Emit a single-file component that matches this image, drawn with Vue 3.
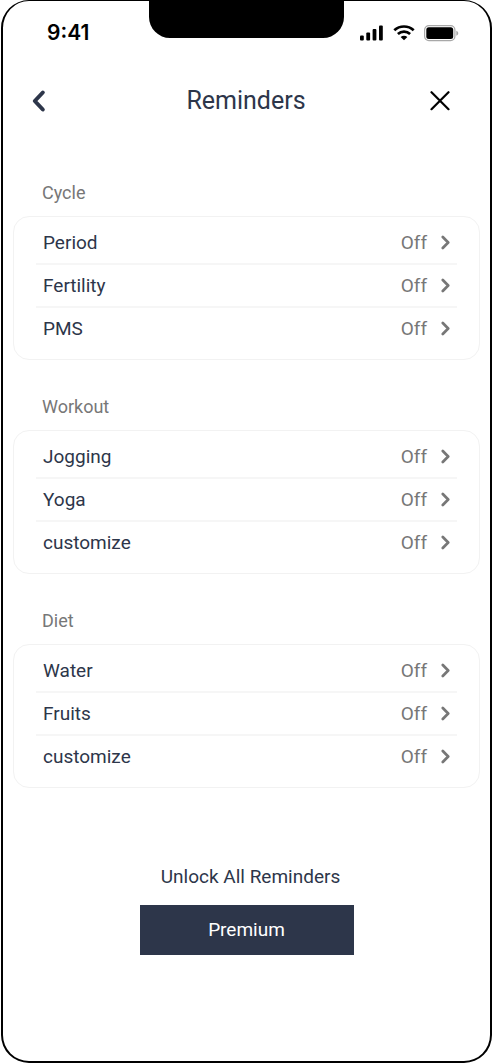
<script setup>
const groups = [
  { title: 'Cycle', items: ['Period', 'Fertility', 'PMS'] },
  { title: 'Workout', items: ['Jogging', 'Yoga', 'customize'] },
  { title: 'Diet', items: ['Water', 'Fruits', 'customize'] },
]
</script>

<template>
  <div class="phone">
    <div class="status">
      <span class="time">9:41</span>
      <div class="notch"></div>
      <div class="indicators">
        <svg width="24" height="16" viewBox="0 0 24 16" aria-hidden="true">
          <rect x="0" y="10.500" width="3.800" height="5" rx="1" />
          <rect x="6.300" y="7.500" width="3.800" height="8" rx="1" />
          <rect x="12.600" y="4" width="3.800" height="11.500" rx="1" />
          <rect x="19" y="0.500" width="3.800" height="15" rx="1" />
        </svg>
        <svg width="22" height="16" viewBox="0 0 22 16" aria-hidden="true">
          <g fill="none" stroke="#000" stroke-width="2.700">
            <path d="M1.300 5.300C6.800 0.200 15.200 0.200 20.700 5.300" />
            <path d="M4.900 9.100C8.400 5.900 13.600 5.900 17.100 9.100" />
          </g>
          <path d="M7.600 11.900C9.600 10.200 12.400 10.200 14.400 11.900L11 15.300Z" />
        </svg>
        <svg width="35" height="17" viewBox="0 0 35 17" aria-hidden="true">
          <rect x="0.600" y="0.600" width="30.300" height="15" rx="4.300" fill="none" stroke="#a8a8a8" stroke-width="1.200" />
          <rect x="2.300" y="2.300" width="26.900" height="11.600" rx="2.500" />
          <path d="M32.300 5.700C34.900 6.700 34.900 9.700 32.300 10.700Z" fill="#a8a8a8" />
        </svg>
      </div>
    </div>

    <header class="header">
      <button class="icon-button back" type="button" aria-label="Back">
        <svg width="16" height="24" viewBox="0 0 16 24" aria-hidden="true">
          <path d="M11.800 3.500L3.800 12L11.800 20.500" fill="none" stroke="#2d364a" stroke-width="4" stroke-linecap="round" stroke-linejoin="round" />
        </svg>
      </button>
      <h1>Reminders</h1>
      <button class="icon-button close" type="button" aria-label="Close">
        <svg width="20" height="20" viewBox="0 0 20 20" aria-hidden="true">
          <path d="M1.500 1.200L18.500 18.200M18.500 1.200L1.500 18.200" fill="none" stroke="#000" stroke-width="2.200" stroke-linecap="round" />
        </svg>
      </button>
    </header>

    <main>
      <section v-for="group in groups" :key="group.title">
        <h2>{{ group.title }}</h2>
        <ul class="card">
          <li v-for="item in group.items" :key="item">
            <button class="row" type="button">
              <span>{{ item }}</span>
              <span class="value">Off</span>
              <svg width="9" height="15" viewBox="0 0 9 15" aria-hidden="true">
                <path d="M1.800 2L7.200 7.500L1.800 13" fill="none" stroke="#777" stroke-width="2.700" stroke-linecap="round" stroke-linejoin="round" />
              </svg>
            </button>
          </li>
        </ul>
      </section>
    </main>

    <footer>
      <p>Unlock All Reminders</p>
      <button class="premium" type="button">Premium</button>
    </footer>
  </div>
</template>

<style>
body {
  background: #fff;
}
</style>

<style scoped>
.phone {
  box-sizing: border-box;
  min-height: calc(100vh - 1px);
  margin: 0 1px;
  border: 2px solid #000;
  border-top-width: 1px;
  border-radius: 28px;
  background: #fff;
  color: #2d364a;
  font-family: Roboto, "Liberation Sans", sans-serif;
  font-size: 19px;
  line-height: 24px;
}

button {
  margin: 0;
  padding: 0;
  border: 0;
  background: none;
  color: inherit;
  font: inherit;
  cursor: pointer;
}

svg {
  display: block;
}

.status {
  display: grid;
  grid-template-columns: 1fr 195px 1fr;
  height: 64px;
}

.time {
  padding: 20px 0 0 44px;
  color: #000;
  font-family: Inter, sans-serif;
  font-size: 21px;
  font-weight: 600;
}

.notch {
  height: 37px;
  border-radius: 0 0 21px 21px;
  background: #000;
}

.indicators {
  display: flex;
  justify-content: flex-end;
  gap: 9px;
  padding: 24px 31px 0 0;
}

.header {
  display: grid;
  grid-template-columns: 1fr auto 1fr;
  align-items: center;
  height: 72px;
  padding: 0 40px 0 28px;
}

.back {
  justify-self: start;
}

.close {
  justify-self: end;
}

h1 {
  margin: 0 0 0 11px;
  font-size: 25px;
  font-weight: 400;
  line-height: 32px;
}

main {
  padding: 44px 10px 0;
}

section {
  margin-bottom: 35px;
}

h2 {
  margin: 0 0 11px;
  padding-left: 29px;
  color: #777;
  font-size: 18px;
  font-weight: 400;
  line-height: 24px;
}

.card {
  margin: 0;
  padding: 5px 22px 10px;
  border: 1px solid #f2f2f2;
  border-radius: 16px;
  list-style: none;
}

li + li {
  border-top: 2px solid #f6f6f6;
}

.row {
  display: flex;
  align-items: center;
  width: 100%;
  height: 41px;
  padding: 0 7px;
  text-align: left;
}

.value {
  margin-left: auto;
  padding-right: 14px;
  color: #777;
}

footer {
  display: flex;
  flex-direction: column;
  align-items: center;
  padding: 42px 0 40px;
}

p {
  margin: 0 0 16px 8px;
}

.premium {
  width: 214px;
  height: 50px;
  background: #2d364a;
  color: #fff;
}
</style>
